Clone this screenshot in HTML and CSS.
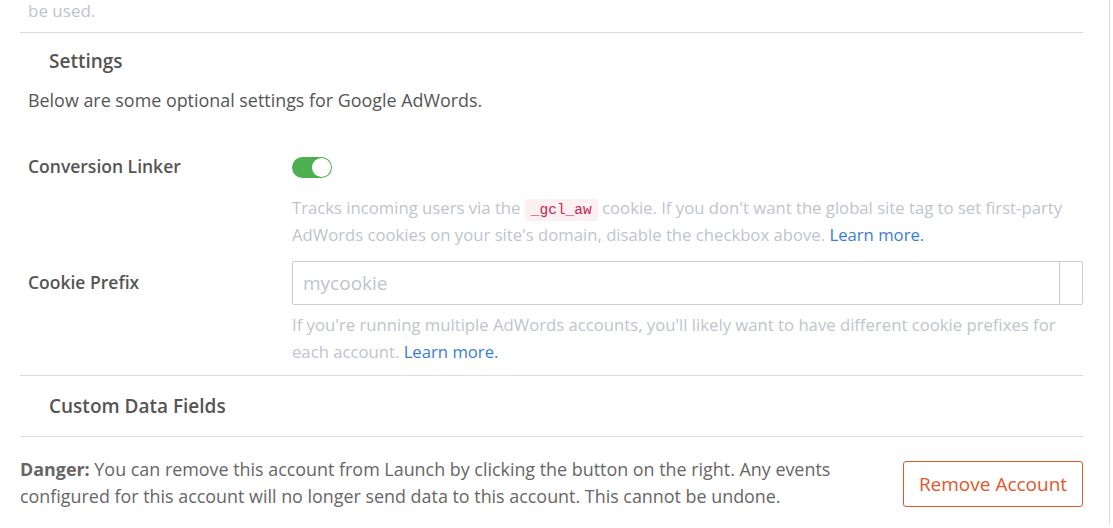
FILE: index.html
```html
<!DOCTYPE html>
<html>
<head>
<meta charset="utf-8">
<link rel="stylesheet" href="styles.css">
</head>
<body>
<div class="page">
  <div class="panel">
    <p class="faded top-text">be used.</p>
    <div class="section">
      <h3 class="section-title">Settings</h3>
      <p class="intro">Below are some optional settings for Google AdWords.</p>
      <div class="field">
        <label class="field-label">Conversion Linker</label>
        <div class="field-body">
          <div class="toggle"><span class="knob"></span></div>
          <p class="help">Tracks incoming users via the <code>_gcl_aw</code> cookie. If you don't want the global site tag to set first-party AdWords cookies on your site's domain, disable the checkbox above. <a href="#">Learn more.</a></p>
        </div>
      </div>
      <div class="field field-input">
        <label class="field-label">Cookie Prefix</label>
        <div class="field-body">
          <div class="input-group">
            <input class="input" type="text" placeholder="mycookie">
            <span class="addon"></span>
          </div>
          <p class="help">If you're running multiple AdWords accounts, you'll likely want to have different cookie prefixes for each account. <a href="#">Learn more.</a></p>
        </div>
      </div>
    </div>
    <div class="section section-plain">
      <h3 class="section-title">Custom Data Fields</h3>
    </div>
    <div class="danger">
      <p class="danger-text"><strong>Danger:</strong> You can remove this account from Launch by clicking the button on the right. Any events configured for this account will no longer send data to this account. This cannot be undone.</p>
      <button class="btn-remove">Remove Account</button>
    </div>
  </div>
</div>
</body>
</html>
```
FILE: styles.css
```css
* { box-sizing: border-box; }
html, body { margin: 0; padding: 0; background: #fff; }
body {
  font-family: "Open Sans", "Noto Sans", sans-serif;
  font-size: 17.5px;
  color: #555;
  overflow: hidden;
  height: 528px;
}
.page {
  width: 1110px;
  height: 528px;
  border-right: 1px solid #ddd;
}
.panel {
  padding: 0 26px 0 20px;
  margin-top: -3px;
}
p { margin: 0; }
.faded { color: #c0c4cc; }
.top-text {
  padding-left: 8px;
  line-height: 27px;
  padding-bottom: 8px;
  font-size: 17px;
}
.section {
  border-top: 1px solid #ddd;
}
.section-title {
  margin: 0;
  font-size: 19px;
  font-weight: 600;
  color: #555;
  padding: 15px 0 0 29px;
  line-height: 27px;
}
.intro {
  padding: 12px 0 0 8px;
  line-height: 27px;
  margin-bottom: 27px;
  font-size: 17.9px;
}
.field {
  display: flex;
  padding-left: 8px;
}
.field-label {
  width: 264px;
  flex: none;
  font-weight: 600;
  line-height: 27px;
  padding-top: 12px;
}
.field-input .field-label { padding-top: 8px; }
.field-body { flex: 1; }
.toggle {
  width: 40px;
  height: 21px;
  border-radius: 11px;
  background: #4caf50;
  position: relative;
  margin: 16px 0 0 0;
}
.knob {
  position: absolute;
  right: 1px;
  top: 1px;
  width: 19px;
  height: 19px;
  border-radius: 50%;
  background: #fff;
}
.help {
  color: #c0c4cc;
  font-size: 16.7px;
  line-height: 27px;
  padding: 16px 0 13px;
}
.field-input .help { padding: 6px 0 10px; }
.help a { color: #3b7dd8; text-decoration: none; }
code {
  font-family: "Liberation Mono", monospace;
  font-size: 14.5px;
  line-height: 1;
  color: #c7254e;
  background: #fdf0f2;
  padding: 3px 6px;
  border-radius: 3px;
}
.input-group {
  display: flex;
  height: 44px;
  border: 1px solid #c9ccd1;
  border-radius: 2px;
}
.input {
  flex: 1;
  border: 0;
  border-right: 1px solid #c9ccd1;
  padding: 0 10px;
  font: inherit;
  font-size: 19px;
  color: #555;
  outline: none;
  background: transparent;
}
.input::placeholder { color: #c0c4cc; }
.addon { width: 22px; flex: none; }
.section-plain {
  border-bottom: 1px solid #ddd;
  padding-bottom: 16px;
}
.section-plain .section-title { padding-top: 17px; }
.danger {
  display: flex;
  align-items: flex-start;
  justify-content: space-between;
  padding-top: 19px;
}
.danger-text {
  width: 830px;
  line-height: 27px;
  font-size: 17.9px;
  color: #666;
}
.danger-text strong { font-weight: 700; color: #666; }
.btn-remove {
  font: inherit;
  font-size: 19px;
  color: #e2572b;
  background: #fff;
  border: 1px solid #e2572b;
  border-radius: 3px;
  width: 180px;
  height: 46px;
  padding: 0;
  margin-top: 5px;
}
```
